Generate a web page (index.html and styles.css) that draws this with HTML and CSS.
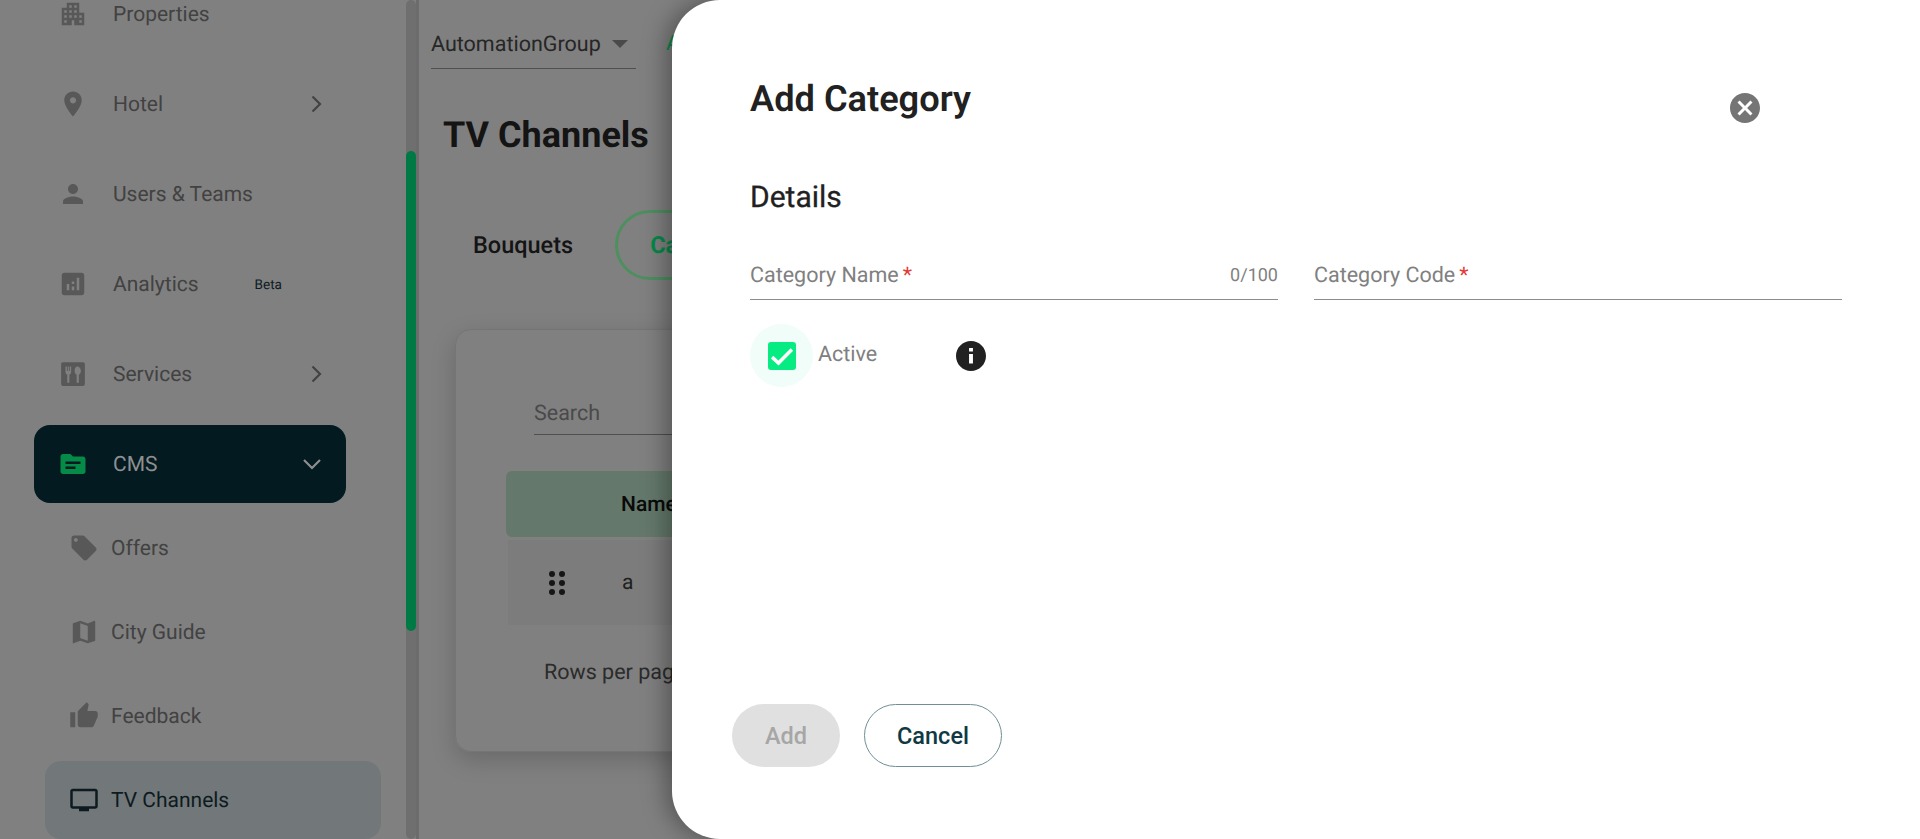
FILE: index.html
```html
<!DOCTYPE html>
<html>
<head>
    <meta charset="UTF-8">
    <title>TV Channels | Add Category</title>
    <link rel="stylesheet" href="styles.css">
</head>
<body>
    <aside class="sidebar">
        <nav class="nav">
            <a class="nav-item">
                <svg class="icon" viewBox="0 0 24 24"><path d="M17 11V3H7v4H3v14h8v-4h2v4h8V11h-4zM7 19H5v-2h2v2zm0-4H5v-2h2v2zm0-4H5V9h2v2zm4 4H9v-2h2v2zm0-4H9V9h2v2zm0-4H9V5h2v2zm4 8h-2v-2h2v2zm0-4h-2V9h2v2zm0-4h-2V5h2v2zm4 12h-2v-2h2v2zm0-4h-2v-2h2v2z"/></svg>
                <span class="label">Properties</span>
            </a>
            <a class="nav-item">
                <svg class="icon" viewBox="0 0 24 24"><path d="M12 2C8.13 2 5 5.13 5 9c0 5.25 7 13 7 13s7-7.75 7-13c0-3.87-3.13-7-7-7zm0 9.5c-1.38 0-2.5-1.12-2.5-2.5s1.12-2.5 2.5-2.5 2.5 1.12 2.5 2.5-1.12 2.5-2.5 2.5z"/></svg>
                <span class="label">Hotel</span>
                <svg class="chevron" viewBox="0 0 24 24"><path d="M8.500 4.500l7.500 7.500-7.500 7.500"/></svg>
            </a>
            <a class="nav-item">
                <svg class="icon" viewBox="0 0 24 24"><path d="M12 12c2.21 0 4-1.79 4-4s-1.79-4-4-4-4 1.79-4 4 1.79 4 4 4zm0 2c-2.67 0-8 1.34-8 4v2h16v-2c0-2.66-5.33-4-8-4z"/></svg>
                <span class="label">Users &amp; Teams</span>
            </a>
            <a class="nav-item">
                <svg class="icon" viewBox="0 0 24 24"><path d="M19 3H5c-1.1 0-2 .9-2 2v14c0 1.1.9 2 2 2h14c1.1 0 2-.9 2-2V5c0-1.1-.9-2-2-2zM9 17H7v-5h2v5zm4 0h-2v-3h2v3zm0-5h-2v-2h2v2zm4 5h-2V7h2v10z"/></svg>
                <span class="label">Analytics</span>
                <span class="beta">Beta</span>
            </a>
            <a class="nav-item">
                <svg class="icon" viewBox="0 0 24 24"><path fill-rule="evenodd" d="M4 2.5h16c.9 0 1.5.6 1.5 1.5v16c0 .9-.6 1.5-1.5 1.5H4c-.9 0-1.5-.6-1.5-1.5V4c0-.9.6-1.5 1.5-1.5zM6 6v4.5c0 1 .6 1.7 1.4 1.9V19h1.7v-6.600c.8-.2 1.400-.9 1.400-1.900V6H9.400v3.600h-.7V6H7.800v3.600h-.7V6zm9.500 0c-1.300 0-2.200 1.500-2.200 3.400 0 1.600.7 2.800 1.600 3.200V19h1.800v-6.400c.9-.4 1.600-1.600 1.600-3.200C18.300 7.500 16.800 6 15.500 6z"/></svg>
                <span class="label">Services</span>
                <svg class="chevron" viewBox="0 0 24 24"><path d="M8.500 4.500l7.500 7.500-7.500 7.500"/></svg>
            </a>
            <a class="nav-item nav-item-open">
                <svg class="icon" viewBox="0 0 24 24"><path d="M20 6h-8l-2-2H4c-1.1 0-1.99.9-1.99 2L2 18c0 1.1.9 2 2 2h16c1.1 0 2-.9 2-2V8c0-1.1-.9-2-2-2zm-6 10H6v-2h8v2zm4-4H6v-2h12v2z"/></svg>
                <span class="label">CMS</span>
                <svg class="chevron" viewBox="0 0 24 24"><path d="M4 8l8 8 8-8"/></svg>
            </a>
            <div class="subnav">
                <a class="sub-item">
                    <svg class="icon" viewBox="0 0 24 24"><path d="M21.41 11.58l-9-9C12.05 2.22 11.55 2 11 2H4c-1.1 0-2 .9-2 2v7c0 .55.22 1.05.59 1.42l9 9c.36.36.86.58 1.41.58.55 0 1.05-.22 1.41-.59l7-7c.37-.36.59-.86.59-1.41 0-.55-.23-1.06-.59-1.42zM5.500 7C4.670 7 4 6.330 4 5.500S4.670 4 5.500 4 7 4.670 7 5.500 6.330 7 5.500 7z"/></svg>
                    <span class="label">Offers</span>
                </a>
                <a class="sub-item">
                    <svg class="icon" viewBox="0 0 24 24"><path d="M20.5 3l-.16.03L15 5.100 9 3 3.360 4.900c-.21.07-.36.25-.36.48V20.500c0 .28.22.5.5.5l.16-.03L9 18.900l6 2.100 5.640-1.900c.21-.07.36-.25.36-.48V3.500c0-.28-.22-.5-.5-.5zM15 19l-6-2.110V5l6 2.110V19z"/></svg>
                    <span class="label">City Guide</span>
                </a>
                <a class="sub-item">
                    <svg class="icon" viewBox="0 0 24 24"><path d="M1 21h4V9H1v12zm22-11c0-1.100-.9-2-2-2h-6.310l.95-4.570.03-.32c0-.41-.17-.79-.44-1.060L14.170 1 7.590 7.590C7.220 7.950 7 8.450 7 9v10c0 1.100.9 2 2 2h9c.83 0 1.540-.5 1.840-1.220l3.020-7.050c.09-.23.14-.47.14-.73v-2z"/></svg>
                    <span class="label">Feedback</span>
                </a>
                <a class="sub-item sub-item-active">
                    <svg class="icon" viewBox="0 0 24 24"><path d="M21 3H3c-1.100 0-2 .9-2 2v12c0 1.100.9 2 2 2h5v2h8v-2h5c1.100 0 1.990-.9 1.990-2L23 5c0-1.100-.9-2-2-2zm0 14H3V5h18v12z"/></svg>
                    <span class="label">TV Channels</span>
                </a>
            </div>
        </nav>
        <div class="scrollbar"><div class="scrollbar-thumb"></div></div>
    </aside>

    <main class="main">
        <div class="topbar">
            <div class="group-select">
                <span>AutomationGroup</span>
                <i class="caret"></i>
            </div>
            <span class="topbar-link">Add</span>
        </div>
        <h1 class="page-title">TV Channels</h1>
        <div class="tabs">
            <span class="tab">Bouquets</span>
            <span class="tab tab-active">Categories</span>
        </div>
        <section class="card">
            <div class="search">Search</div>
            <div class="table-head"><span>Name</span></div>
            <div class="table-row">
                <svg class="drag" viewBox="0 0 16 24"><circle cx="3" cy="3" r="3"/><circle cx="13" cy="3" r="3"/><circle cx="3" cy="12" r="3"/><circle cx="13" cy="12" r="3"/><circle cx="3" cy="21" r="3"/><circle cx="13" cy="21" r="3"/></svg>
                <span>a</span>
            </div>
            <div class="pager">Rows per page</div>
        </section>
    </main>

    <div class="drawer">
        <header class="drawer-head">
            <h2 class="drawer-title">Add Category</h2>
            <svg class="close" viewBox="0 0 24 24"><path d="M12 2C6.470 2 2 6.470 2 12s4.470 10 10 10 10-4.470 10-10S17.530 2 12 2zm5 13.590L15.590 17 12 13.410 8.410 17 7 15.590 10.590 12 7 8.410 8.410 7 12 10.590 15.590 7 17 8.410 13.410 12 17 15.590z"/></svg>
        </header>
        <h3 class="section-title">Details</h3>
        <div class="fields">
            <div class="field">
                <span>Category Name<em>*</em></span>
                <span class="counter">0/100</span>
            </div>
            <div class="field">
                <span>Category Code<em>*</em></span>
            </div>
        </div>
        <div class="active-row">
            <span class="check-halo">
                <span class="check-box">
                    <svg viewBox="0 0 24 24"><path d="M3.500 13l5.500 5L20.500 6.500"/></svg>
                </span>
            </span>
            <span class="active-label">Active</span>
            <svg class="info" viewBox="0 0 24 24"><path d="M12 2C6.480 2 2 6.480 2 12s4.480 10 10 10 10-4.480 10-10S17.520 2 12 2zm1.300 15h-2.600v-6.300h2.600V17zm0-8h-2.600V6.600h2.600V9z"/></svg>
        </div>
        <footer class="drawer-actions">
            <button class="btn btn-add" disabled>Add</button>
            <button class="btn btn-cancel">Cancel</button>
        </footer>
    </div>
</body>
</html>
```

FILE: styles.css
```css
* {
    box-sizing: border-box;
}

html, body {
    height: 100%;
}

body {
    margin: 0;
    display: flex;
    overflow: hidden;
    background: #808080;
    font-family: Roboto, "Liberation Sans", sans-serif;
    color: #1a1a1a;
    text-rendering: geometricPrecision;
}

/* sidebar */
.sidebar {
    display: flex;
    width: 416px;
    height: 100vh;
    flex-shrink: 0;
    overflow: hidden;
}

.nav {
    width: 406px;
    margin-top: -25px;
    padding-left: 34px;
    display: flex;
    flex-direction: column;
    gap: 12px;
}

.nav-item {
    width: 312px;
    height: 78px;
    flex-shrink: 0;
    padding: 0 18px 0 24px;
    display: flex;
    align-items: center;
    gap: 25px;
    font-size: 21px;
    color: #424242;
}

.label {
    padding-top: 2px;
}

.icon {
    width: 30px;
    height: 30px;
    flex-shrink: 0;
    fill: #585858;
}

.chevron {
    width: 24px;
    height: 24px;
    margin-left: auto;
    fill: none;
    stroke: #424242;
    stroke-width: 2.200;
}

.beta {
    margin-left: 31px;
    padding-top: 2px;
    font-size: 13.500px;
    color: #0d1b20;
}

.nav-item-open {
    padding-right: 22px;
    border-radius: 16px;
    background: #021a20;
    color: #8f8f8f;
}

.nav-item-open .icon {
    fill: #058a48;
}

.nav-item-open .chevron {
    stroke: #8f8f8f;
}

.subnav {
    display: flex;
    flex-direction: column;
    gap: 6px;
    margin: -6px 0 0 11px;
}

.sub-item {
    width: 336px;
    height: 78px;
    padding-left: 24px;
    display: flex;
    align-items: center;
    gap: 12px;
    font-size: 21px;
    color: #424242;
}

.sub-item-active {
    border-radius: 16px;
    background: #72777a;
    color: #0d1b20;
}

.sub-item-active .icon {
    fill: #0d1b20;
}

.scrollbar {
    width: 10px;
    padding-top: 151px;
    border-radius: 5px;
    background: #6f6f6f;
}

.scrollbar-thumb {
    height: 480px;
    border-radius: 5px;
    background: #007a45;
}

/* page behind the drawer */
.main {
    flex: 1;
    min-width: 0;
    border-left: 3px solid #6c6c6c;
    padding-left: 12px;
}

.topbar {
    height: 69px;
    display: flex;
    gap: 30px;
}

.group-select {
    width: 205px;
    display: flex;
    align-items: center;
    padding-top: 20px;
    border-bottom: 1px solid #4f4f4f;
    font-size: 21.500px;
    color: #262626;
}

.caret {
    margin-left: 11px;
    border: 8px solid transparent;
    border-top: 8px solid #4a4a4a;
    border-bottom: 0;
}

.topbar-link {
    padding-top: 32px;
    font-size: 21px;
    color: #058a48;
}

.page-title {
    margin: 44px 0 0 12px;
    font-size: 36px;
    line-height: 44px;
    font-weight: 700;
    color: #141414;
}

.tabs {
    margin: 53px 0 0 42px;
    display: flex;
    align-items: center;
    gap: 42px;
}

.tab {
    font-size: 23.500px;
    font-weight: 500;
    color: #141414;
}

.tab-active {
    height: 70px;
    padding: 0 32px;
    display: flex;
    align-items: center;
    border: 3px solid #4d8f5f;
    border-radius: 35px;
    font-weight: 700;
    color: #058a48;
}

.card {
    width: 1300px;
    height: 423px;
    margin: 49px 0 0 24px;
    padding: 0 50px;
    border: 1px solid #757575;
    border-radius: 16px;
    box-shadow: 0 8px 24px rgba(0, 0, 0, 0.18);
}

.search {
    height: 105px;
    margin: 0 0 36px 28px;
    padding-top: 71px;
    border-bottom: 1px solid #4f4f4f;
    font-size: 21.500px;
    color: #4a4a4a;
}

.table-head {
    height: 66px;
    padding: 2px 0 0 115px;
    display: flex;
    align-items: center;
    border-radius: 6px;
    background: #64796b;
    font-size: 21px;
    font-weight: 500;
    color: #0a0a0a;
}

.table-row {
    height: 85px;
    margin: 3px 0 0 2px;
    padding-left: 41px;
    display: flex;
    align-items: center;
    gap: 57px;
    background: #7c7c7c;
    font-size: 21px;
    color: #1f1f1f;
}

.drag {
    width: 16px;
    height: 24px;
    fill: #161616;
}

.pager {
    margin: 35px 0 0 38px;
    font-size: 21.500px;
    color: #2b2b2b;
}

/* drawer */
.drawer {
    position: absolute;
    top: 0;
    right: 0;
    bottom: 0;
    left: 672px;
    padding: 75px 78px 72px 78px;
    display: flex;
    flex-direction: column;
    border-radius: 48px 0 0 48px;
    background: #fff;
    box-shadow: -6px 0 24px rgba(0, 0, 0, 0.35);
}

.drawer-head {
    display: flex;
    align-items: flex-start;
    justify-content: space-between;
    padding-right: 79px;
}

.drawer-title {
    margin: 0;
    font-size: 36.200px;
    line-height: 48px;
    font-weight: 600;
    color: #212121;
}

.close {
    width: 36px;
    height: 36px;
    margin-top: 15px;
    fill: #757575;
}

.section-title {
    margin: 54px 0 0;
    font-size: 30px;
    line-height: 36px;
    font-weight: 400;
    -webkit-text-stroke: 0.3px #212121;
    color: #212121;
}

.fields {
    margin-top: 38px;
    display: grid;
    grid-template-columns: 1fr 1fr;
    gap: 36px;
}

.field {
    height: 46px;
    padding-bottom: 3px;
    display: flex;
    align-items: center;
    justify-content: space-between;
    border-bottom: 1px solid #8c8c8c;
    font-size: 21.500px;
    color: #808080;
}

.field em {
    margin-left: 4px;
    font-style: normal;
    color: #e53935;
}

.counter {
    font-size: 18px;
}

.active-row {
    margin-top: 24px;
    display: flex;
    align-items: center;
}

.check-halo {
    width: 63px;
    height: 63px;
    display: flex;
    align-items: center;
    justify-content: center;
    border-radius: 50%;
    background: #f1fdf9;
}

.check-box {
    width: 28px;
    height: 28px;
    border-radius: 3px;
    background: #06ec83;
}

.check-box svg {
    display: block;
    fill: none;
    stroke: #fff;
    stroke-width: 3;
}

.active-label {
    margin: -3px 0 0 5px;
    font-size: 21.500px;
    color: #808080;
}

.info {
    width: 36px;
    height: 36px;
    margin: 1px 0 0 76px;
    fill: #212121;
}

.drawer-actions {
    margin: auto 0 0 -18px;
    display: flex;
    gap: 24px;
}

.btn {
    height: 63px;
    border-radius: 32px;
    font-family: inherit;
    font-size: 23.500px;
    font-weight: 500;
}

.btn-add {
    width: 108px;
    border: none;
    background: #e0e0e0;
    color: #a6a6a6;
}

.btn-cancel {
    width: 138px;
    border: 1px solid #6f8f96;
    background: #fff;
    color: #0f3a44;
}
```
